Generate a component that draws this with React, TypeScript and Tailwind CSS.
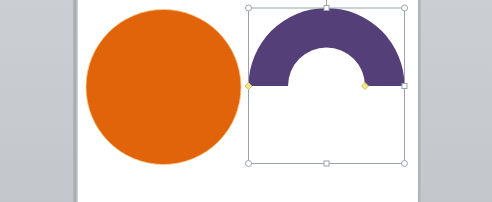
import React from "react";

export default function App() {
  const handle = "#9aa3ae";
  return (
    <div className="flex h-[202px] w-[492px] overflow-hidden bg-[#c6c9ce]">
      <div className="h-full w-[73px] bg-gradient-to-b from-[#cbced3] to-[#c3c6cb]" />
      <div className="h-full w-[5px] bg-gradient-to-r from-[#b4b7bc] via-[#a7aab0] to-[#d6d8db]" />
      <div className="relative h-full w-[340px] bg-white">
        <svg width="340" height="202" viewBox="0 0 340 202" className="absolute left-0 top-0">
          <circle cx="85.5" cy="87" r="77.5" fill="#e1630a" stroke="#f4c98a" strokeWidth="0.8" />
          <path
            d="M 170.5 86 A 78 78 0 0 1 326.5 86 L 287 86 A 38.5 38.5 0 0 0 210 86 Z"
            fill="#553f78"
          />
          <line x1="248.5" y1="0" x2="248.5" y2="8" stroke={handle} strokeWidth="1" />
          <rect x="170.5" y="8" width="156" height="155.5" fill="none" stroke={handle} strokeWidth="1" />
          {[
            [170.5, 8],
            [326.5, 8],
            [170.5, 163.5],
            [326.5, 163.5],
          ].map(([x, y], i) => (
            <circle key={i} cx={x} cy={y} r="3" fill="#ffffff" stroke={handle} strokeWidth="1" />
          ))}
          {[
            [248.5, 8],
            [326.5, 86],
            [248.5, 163.5],
          ].map(([x, y], i) => (
            <rect key={i} x={x - 2.5} y={y - 2.5} width="5" height="5" fill="#ffffff" stroke={handle} strokeWidth="1" />
          ))}
          {[
            [170.5, 86],
            [287, 86],
          ].map(([x, y], i) => (
            <path
              key={i}
              d={`M ${x} ${y - 3.5} L ${x + 3.5} ${y} L ${x} ${y + 3.5} L ${x - 3.5} ${y} Z`}
              fill="#f2e58a"
              stroke="#c9b85a"
              strokeWidth="0.8"
            />
          ))}
        </svg>
      </div>
      <div className="h-full w-[3px] bg-gradient-to-r from-[#a9acb1] to-[#bcbfc4]" />
      <div className="h-full flex-1 bg-gradient-to-b from-[#cbced3] to-[#c3c6cb]" />
    </div>
  );
}
